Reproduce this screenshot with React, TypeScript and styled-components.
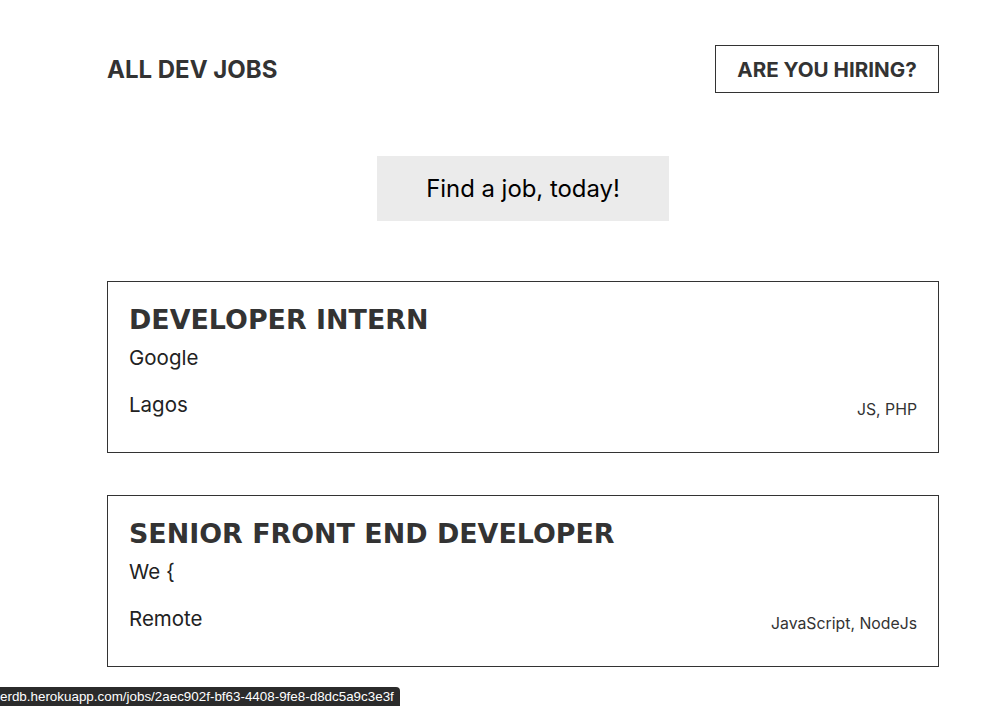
import React from "react";
import styled, { createGlobalStyle } from "styled-components";

const Global = createGlobalStyle`
  html, body { margin: 0; padding: 0; background: #fff; }
  body { font-family: Inter, "Noto Sans", sans-serif; color: #333; }
`;

const Page = styled.div`
  width: 832px;
  margin: 0 auto 0 107px;
  padding-top: 45px;
`;

const Header = styled.header`
  display: flex;
  justify-content: space-between;
  align-items: center;
  height: 48px;
`;

const Logo = styled.h1`
  margin: 0;
  font-family: Inter, sans-serif;
  font-weight: 700;
  font-size: 24px;
  color: #333;
`;

const HireButton = styled.a`
  box-sizing: border-box;
  display: flex;
  align-items: center;
  justify-content: center;
  width: 224px;
  height: 48px;
  border: 1px solid #333;
  font-family: Inter, sans-serif;
  font-weight: 700;
  font-size: 20.6px;
  color: #333;
  text-decoration: none;
`;

const Hero = styled.div`
  display: flex;
  justify-content: center;
  margin-top: 63px;
`;

const FindButton = styled.button`
  width: 292px;
  height: 65px;
  border: none;
  background: #ebebeb;
  font-family: Inter, sans-serif;
  font-size: 23.9px;
  color: #000;
`;

const List = styled.div`
  display: flex;
  flex-direction: column;
  gap: 42px;
  margin-top: 60px;
`;

const Card = styled.article`
  box-sizing: border-box;
  height: 172px;
  border: 1px solid #333;
  padding: 21px 21px 0 21px;
  display: flex;
  flex-direction: column;
`;

const Title = styled.h2`
  margin: 0;
  font-family: "DejaVu Sans", sans-serif;
  font-weight: 700;
  font-size: 26.9px;
  line-height: 34px;
  color: #333;
`;

const Company = styled.div`
  font-family: Inter, sans-serif;
  font-size: 20.5px;
  line-height: 26px;
  margin-top: 8px;
  color: #222;
`;

const Footer = styled.div`
  display: flex;
  justify-content: space-between;
  align-items: flex-end;
  margin-top: 21px;
`;

const Location = styled.div`
  font-family: Inter, sans-serif;
  font-size: 20.5px;
  line-height: 26px;
  color: #222;
`;

const Tags = styled.div`
  font-family: Inter, sans-serif;
  font-size: 15.8px;
  line-height: 16.5px;
  color: #333;
`;

const StatusBar = styled.div`
  position: fixed;
  left: 0;
  bottom: 0;
  height: 19px;
  padding: 0 6px 0 0;
  background: #2b2b2b;
  border-top-right-radius: 4px;
  color: #fff;
  font-family: "Liberation Sans", Arial, sans-serif;
  font-size: 13.4px;
  line-height: 19px;
  white-space: nowrap;
`;

const jobs = [
  { title: "DEVELOPER INTERN", company: "Google", location: "Lagos", tags: "JS, PHP" },
  { title: "SENIOR FRONT END DEVELOPER", company: "We {", location: "Remote", tags: "JavaScript, NodeJs" },
];

export default function App() {
  return (
    <>
      <Global />
      <Page>
        <Header>
          <Logo>ALL DEV JOBS</Logo>
          <HireButton href="#">ARE YOU HIRING?</HireButton>
        </Header>
        <Hero>
          <FindButton>Find a job, today!</FindButton>
        </Hero>
        <List>
          {jobs.map((j) => (
            <Card key={j.title}>
              <Title>{j.title}</Title>
              <Company>{j.company}</Company>
              <Footer>
                <Location>{j.location}</Location>
                <Tags>{j.tags}</Tags>
              </Footer>
            </Card>
          ))}
        </List>
      </Page>
      <StatusBar>erdb.herokuapp.com/jobs/2aec902f-bf63-4408-9fe8-d8dc5a9c3e3f</StatusBar>
    </>
  );
}
